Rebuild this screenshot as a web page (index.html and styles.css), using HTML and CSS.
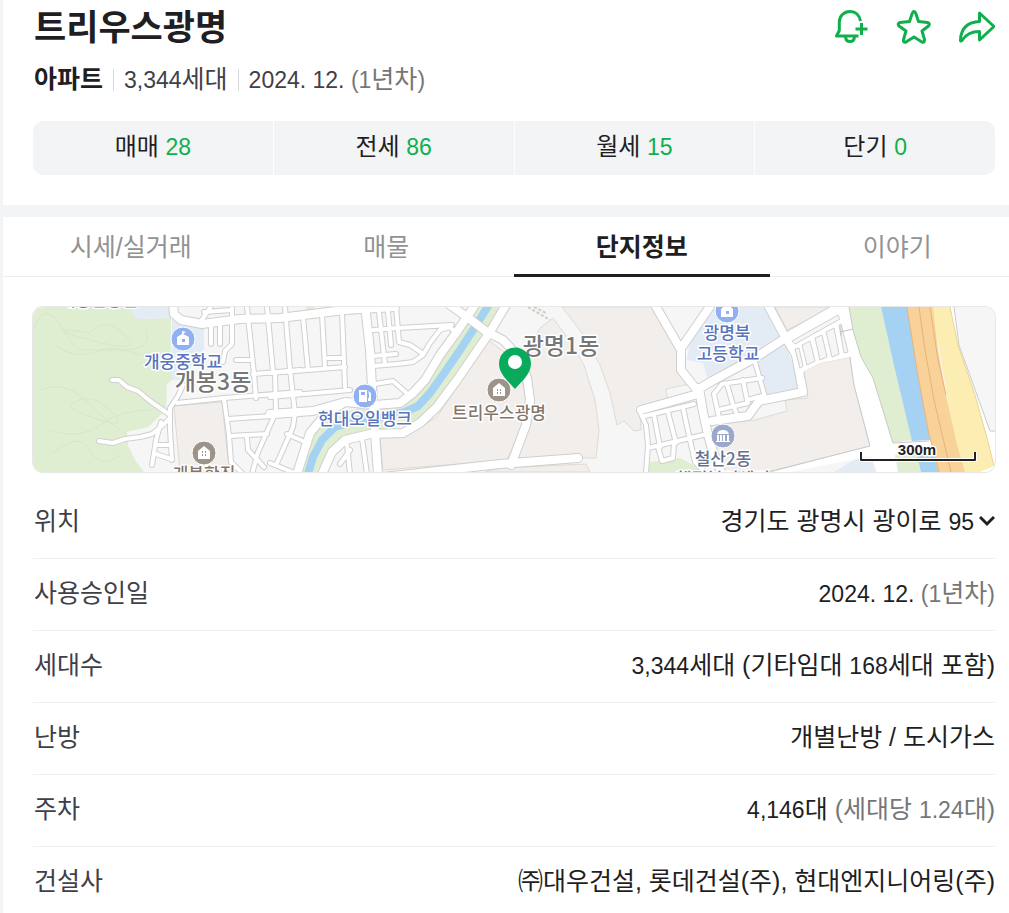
FILE: index.html
```html
<!DOCTYPE html>
<html lang="ko">
<head>
<meta charset="utf-8">
<meta name="viewport" content="width=device-width, initial-scale=1">
<title>트리우스광명</title>
<link rel="stylesheet" href="styles.css">
</head>
<body>
<main class="page">
  <header class="summary">
    <div class="title-row">
      <h1 class="title">트리우스광명</h1>
      <div class="actions">
        <button class="icon-btn" type="button" aria-label="알림 추가">
          <svg width="36" height="36" viewBox="0 0 36 36"><path d="M27.500 13C26.500 7.500 22.500 3.500 17 3.500C11 3.500 6.300 8 6.300 14V22.500L3.500 28H25.500M12.500 29Q13 33.500 17 33.500Q21 33.500 21.500 29M28.500 15v12M22.500 21h12"/></svg>
        </button>
        <button class="icon-btn" type="button" aria-label="관심단지">
          <svg width="36" height="36" viewBox="0 0 36 36"><path d="M18 3.500Q19 3.500 20 6L22.500 13.500L31.500 14.500Q34.500 15.500 32.500 18L26 23L28.500 31.500Q28.500 35 26 34L18 29L10 34Q7 35 7.500 31.500L10 23L3 18Q1 15.500 4 14.500L13.500 13.500L16 6Q17 3.500 18 3.500Z"/></svg>
        </button>
        <button class="icon-btn" type="button" aria-label="공유">
          <svg width="36" height="36" viewBox="0 0 36 36"><path d="M20.500 5L35 18.500L20.500 32V23.500C12 23.500 7 26 3 32.500Q1 34 1.500 31C2.500 20 9 14 20.500 13.500Z"/></svg>
        </button>
      </div>
    </div>
    <div class="meta">
      <strong class="kind">아파트</strong>
      <span class="fact"><span class="num">3,344</span>세대</span>
      <span class="fact"><span class="num">2024. 12. </span><span class="muted"><span class="num">(1</span>년차<span class="num">)</span></span></span>
    </div>
    <div class="deals">
      <button class="deal" type="button">매매 <span class="num count">28</span></button>
      <button class="deal" type="button">전세 <span class="num count">86</span></button>
      <button class="deal" type="button">월세 <span class="num count">15</span></button>
      <button class="deal" type="button">단기 <span class="num count">0</span></button>
    </div>
  </header>

  <nav class="tabs">
    <a class="tab" href="#price">시세/실거래</a>
    <a class="tab" href="#list">매물</a>
    <a class="tab tab-on" href="#info" aria-current="page">단지정보</a>
    <a class="tab" href="#story">이야기</a>
  </nav>

  <section class="info" id="info">
    <svg class="map" viewBox="33 307 962 165" role="img" aria-label="단지 위치 지도">
      <defs>
        <g id="lanes">
          <path d="M112 380L119 380L127 387L138 391L150 401L170 415M99 441L113 443L125 439L140 437L152 434L162 426L170 418M183 385L178 396L170 408V430L172 460M177 403L224 398L300 392M161 422L156 440L152 465M158 445H171M156 454L171 459"/>
          <path d="M212 305L199 324M204 312L232 310M211 324V344M220 324V344M232 305V344L225 351L223 362M236 360H250M247 307L254 374L256 398M267 307L273 372M224 399L229 435L231 462L243 474M275 372L276 412L258 452L252 474M228 419L300 414M230 436L267 434M247 438L248 450L264 467M253 374L300 370"/>
          <path d="M285 307L290 370L295 413L293 427L277 463M303 317L308 370M322 315L325 367M342 313L345 387M270 373L345 367M328 358H343M373 366L397 364L413 362L423 355L430 343L440 330L450 327L457 335M270 397L350 390M375 384L393 381L411 397M373 356L396 354M373 330L398 328L452 325M379 312L385 365M388 312L391 345M396 307L399 342L410 345L422 353"/>
          <path d="M347 445L350 474M362 438L367 474M287 434L305 442M270 463L297 474M340 464L350 450"/>
          <path d="M640 412L646 425L648 445L646 474M645 416L694 404M654 415L660 447M668 412L676 443M683 408L690 440L695 462L703 470M648 448L703 435M658 447L662 461L673 458L674 443"/>
          <path d="M714 394L719 418M714 394L722 384L762 378M727 384L733 405L738 417M743 380L747 400L762 396M718 410L748 403M755 362L765 397"/>
        </g>
        <g id="streets">
          <path d="M173 303L174 314L181 320L202 324L240 319L280 318L320 313L345 310L395 307M270 414L313 411L345 402L375 405L400 403L413 393L425 380L440 355L456 333L475 305M345 402L325 415L310 433L303 455L297 474"/>
          <path d="M365 305L370 350L372 387L375 433L378 474"/>
          <path d="M506 305L490 332L457 380L437 407L420 423L403 433L370 434L345 440L332 452L322 474"/>
          <path d="M450 305L467 317L487 332L503 340L517 355L527 378L530 400L526 425L511 465M383 477L500 464L578 458"/>
          <path d="M655 305L681 350L681 370L697 390M711 305L682 347M641 410L698 394M697 390L712 381L755 358L790 335L842 305M699 388L703 412L708 435L713 452L722 474M768 305L783 333L796 355L803 392L759 401L748 416L712 421"/>
        </g>
      </defs>
      <rect class="ground" x="33" y="307" width="962" height="165"/>
      <path class="green" d="M33 307H128L137 319L171 318V357L173 379L167 384L166 410L148 427L127 432L128 445L135 460L144 472H33Z"/>
      <path class="contour" d="M33 330Q45 300 60 325T80 350T120 350T145 330M55 345Q75 360 95 352T140 355M40 390Q65 380 85 400T120 430M70 405Q90 390 110 410T100 420T70 405M48 430Q80 440 100 425T150 410M50 455Q80 430 90 450T120 455M90 333Q105 315 125 335T90 340T90 333"/>
      <path class="campus" d="M128 307H170L175 322L204 325V350L180 380H172V318L137 319ZM715 307L690 342L687 360L703 363L707 377L765 350L780 336L768 307ZM757 357L785 344L797 375V390L764 397ZM834 472L860 456L872 460L877 472Z"/>
      <path class="estate" d="M174 406L222 402L228 460L231 472H180ZM488 340L515 360L523 385L527 400L520 430L507 460L383 470L380 438L407 435L437 417ZM540 328L553 318L567 337L584 365L595 400L599 430L596 458H515L530 420L532 385L525 355ZM562 307H653L678 350L680 372L690 384L666 389L668 402L640 411L641 430L634 431L624 421L617 425L610 393L600 365L585 337ZM485 472L500 468L586 464L590 472ZM775 307H835L787 330ZM707 425L755 420L787 411L785 400L808 398L803 372L820 363L850 357L854 385L870 446L770 472H718Z"/>
      <path class="green" d="M650 462L680 458L706 472H648ZM306 307H314L313 314H307Z"/>
      <path class="bank" d="M490 303L475 327L460 350L445 372L430 393L418 406L405 412L385 417L360 420L335 427L322 440L313 457L308 474"/>
      <path class="water-line" d="M490 303L475 327L460 350L445 372L430 393L418 406L405 412L385 417L360 420L335 427L322 440L313 457L308 474"/>
      <use class="lane-case" href="#lanes"/>
      <use class="street-case" href="#streets"/>
      <use class="lane" href="#lanes"/>
      <use class="street" href="#streets"/>
      <path class="tracks" d="M528 307L550 320M534 307L546 313"/>
      <path class="road-area" d="M790 336L842 306H849L853 330L861 357L873 378L892 443L935 440V454L895 456L900 473H877L871 456L780 474H765L870 446L854 385L850 357L820 363L803 372Z"/>
      <path class="block" d="M792 341L838 315L840 319L795 344ZM795 349L799 348L803 366L800 368ZM802 345L810 341L815 361L807 365ZM815 338L822 335L827 357L820 360ZM826 332L834 328L839 354L832 357ZM839 325L841 324L848 352L844 353Z"/>
      <path class="fence" d="M840 332L862 327M841 325V336M862 324V328"/>
      <path class="green" d="M849 307H881L895 370L912 440L893 443L873 378L861 357L853 330ZM895 455L917 452L921 472H898Z"/>
      <path class="water" d="M881 307H908L917 370L930 440L912 441L895 370ZM917 455H936L940 472H921Z"/>
      <path class="verge" d="M950 307H954L960 345L977 395L989 430L995 431V472H980Z"/>
      <path class="yellow" d="M932 307H950L958 345L975 395L987 438L994 466L980 472H960Z"/>
      <path class="orange" d="M907 307H933L938 350L946 395L957 445L965 472H938L928 430L917 370Z"/>
      <path class="orange-line" d="M907 307L917 370L928 430L939 472M919 307L925 350L934 400L951 472M930 307L938 360L946 395"/>
      <path class="yellow-line" d="M950 307L958 345L975 395L987 438L994 466"/>
      <path class="edge" d="M954 307L959 345L977 395L990 431H995M849 307L853 330L861 357L873 378L893 443L929 441M850 357L854 385L870 446L768 472"/>

      <g class="poi">
        <circle class="poi-blue" cx="183" cy="339" r="12"/>
        <path d="M177 337L182 334V331L186 332L183 334L189 337V345H177Z"/><rect class="poi-blue-dot" x="182" y="339" width="3" height="3"/>
        <circle class="poi-blue" cx="727" cy="311" r="12"/>
        <path d="M721 309L727 304L733 309V317H721Z"/><rect class="poi-blue-dot" x="726" y="311" width="3" height="3"/>
        <circle class="poi-blue" cx="365" cy="396" r="12"/>
        <path d="M359 390H367V402H359ZM368 391L371 393V401H368V398H369V394Z"/><rect class="poi-blue-dot" x="361" y="392" width="4" height="3"/>
        <circle class="poi-brown" cx="204" cy="453" r="12"/>
        <path d="M198 451L204 446L210 451V459H198Z"/><path class="windows" d="M202 452h1M205 452h1M202 455h1M205 455h1"/>
        <circle class="poi-brown" cx="499" cy="390" r="12"/>
        <path d="M493 388L499 383L505 388V396H493Z"/><path class="windows" d="M497 390h1M500 390h1M497 393h1M500 393h1"/>
        <circle class="poi-slate" cx="723" cy="436" r="12"/>
        <path d="M717 434Q718 430 723 430Q728 430 729 434ZM717 435h2v6h-2zM720 435h2v6h-2zM723 435h2v6h-2zM727 435h2v6h-2zM716 441h14v1h-14z"/>
      </g>

      <g class="label">
        <text class="t-green" x="99" y="306">개웅산공원</text>
        <text class="t-blue" x="183" y="368">개웅중학교</text>
        <text class="t-blue" x="365" y="425">현대오일뱅크</text>
        <text class="t-blue" x="727" y="339">광명북</text>
        <text class="t-blue" x="728" y="360">고등학교</text>
        <text class="t-brown" x="499" y="419">트리우스광명</text>
        <text class="t-brown" x="204" y="480">개봉한진</text>
        <text class="t-slate" x="723" y="465">철산2동</text>
        <text class="t-slate" x="723" y="485">행정복지센터</text>
        <text class="t-area" x="213" y="390">개봉3동</text>
        <text class="t-area" x="561" y="354">광명1동</text>
        <text class="t-scale" x="917" y="455">300m</text>
      </g>
      <path class="scale-halo" d="M861 452V460H975V452"/>
      <path class="scale" d="M861 452V460H975V452"/>
      <path class="pin" fill-rule="evenodd" d="M515 347.500A16 16 0 0 0 499 363.500C499 374 508 381 515 389C522 381 531 374 531 363.500A16 16 0 0 0 515 347.500Z"/>
      <circle class="pin-hole" cx="515" cy="362" r="7"/>
    </svg>

    <dl class="rows">
      <div class="row"><dt>위치</dt><dd><button class="address" type="button">경기도 광명시 광이로 <span class="num">95</span><svg width="16" height="16" viewBox="0 0 16 16"><path d="M1 4L8 11L15 4"/></svg></button></dd></div>
      <div class="row"><dt>사용승인일</dt><dd><span class="num">2024. 12. </span><span class="muted"><span class="num">(1</span>년차<span class="num">)</span></span></dd></div>
      <div class="row"><dt>세대수</dt><dd><span class="num">3,344</span>세대 (기타임대 <span class="num">168</span>세대 포함)</dd></div>
      <div class="row"><dt>난방</dt><dd>개별난방 / 도시가스</dd></div>
      <div class="row"><dt>주차</dt><dd><span class="num">4,146</span>대 <span class="muted">(세대당 <span class="num">1.24</span>대)</span></dd></div>
      <div class="row"><dt>건설사</dt><dd>㈜대우건설, 롯데건설(주), 현대엔지니어링(주)</dd></div>
    </dl>
  </section>
</main>
</body>
</html>
```
FILE: styles.css
```css
* { box-sizing: border-box; }
body {
  margin: 0;
  background: #f2f4f6;
  color: #1e1e23;
  font-family: "Liberation Sans", "Noto Sans CJK KR", sans-serif;
  font-size: 25px;
  line-height: 36px;
}
button {
  border: 0;
  padding: 0;
  background: none;
  color: inherit;
  font: inherit;
}
.num { font-size: 23px; line-height: 24px; }
.muted { color: #767678; }

.page {
  margin-left: 3px;
  background: #fff;
  overflow-x: clip;
}

.summary {
  padding: 4px 14px 30px 30px;
  border-bottom: 12px solid #f2f4f6;
}
.title-row {
  display: flex;
  justify-content: space-between;
  align-items: flex-start;
}
.title {
  margin: 0 0 0 1px;
  font-size: 35px;
  line-height: 48px;
}
.actions { display: flex; gap: 27px; }
.icon-btn { display: block; height: 40px; }
.icon-btn svg {
  display: block;
  margin-top: 4px;
  fill: none;
  stroke: #0fb04c;
  stroke-width: 3;
  stroke-linejoin: round;
}
.meta {
  display: flex;
  align-items: center;
  margin: 9px 0 24px 1px;
  color: #404048;
  white-space: pre;
}
.kind { color: #1e1e23; }
.fact { display: flex; align-items: baseline; }
.fact::before {
  content: "";
  align-self: center;
  width: 1px;
  height: 22px;
  margin: 2px 10px 0;
  background: #d8d8dc;
}
.deals {
  display: grid;
  grid-template-columns: repeat(4, 1fr);
  gap: 1px;
  border-radius: 10px;
  overflow: hidden;
}
.deal {
  padding: 8px 0 10px;
  background: #f2f4f6;
  font-size: 24px;
}
.count { color: #0fb04c; }

.tabs {
  display: grid;
  grid-template-columns: repeat(4, 1fr);
  margin-right: -16px;
  border-bottom: 1px solid #ededf0;
}
.tab {
  margin-bottom: -1px;
  padding: 12px 0 9px;
  border-bottom: 3px solid transparent;
  color: #929294;
  text-align: center;
  text-decoration: none;
}
.tab-on {
  border-color: #1e1e23;
  color: #1e1e23;
  font-weight: bold;
}

.info { padding: 30px 14px 0 30px; }
.map {
  display: block;
  width: 100%;
  border-radius: 10px;
  box-shadow: 0 0 0 1px #e8e8e8;
}
.map path, .map use { stroke-linejoin: round; }
.ground, .block { fill: #f6f6f6; }
.green { fill: #dfedd0; }
.contour { fill: none; stroke: #d6e6c8; }
.campus { fill: #e3ebf4; }
.estate { fill: #f1eeec; stroke: #e0dad2; }
.bank { fill: none; stroke: #dfedd0; stroke-width: 24; }
.water-line { fill: none; stroke: #a5d2f3; stroke-width: 8; }
.water { fill: #a5d2f3; }
.lane-case, .street-case, .lane, .street { fill: none; stroke-linecap: round; }
.lane-case { stroke: #cfcfcf; stroke-width: 6; }
.lane { stroke: #fff; stroke-width: 4; }
.street-case { stroke: #cfcfcf; stroke-width: 10; }
.street { stroke: #fff; stroke-width: 8; }
.tracks { fill: none; stroke: #d0cbc0; stroke-width: 2; stroke-dasharray: 3 2; }
.road-area, .verge { fill: #fff; }
.block { stroke: #cfcfcf; }
.fence { fill: none; stroke: #cdbfb9; }
.orange { fill: #f8d298; }
.orange-line { fill: none; stroke: #e8b27a; stroke-width: 1; }
.yellow { fill: #fceeb3; }
.yellow-line { fill: none; stroke: #ead58c; stroke-width: 1; }
.edge { fill: none; stroke: #cacaca; }
.poi { fill: #fff; }
.poi circle { stroke: #fff; stroke-width: 1; }
.poi-blue, .poi-blue-dot { fill: #91b0f2; }
.poi-brown { fill: #9d9389; }
.poi-slate { fill: #9ba8cb; }
.windows { stroke: #9d9389; stroke-width: 2; }
.label {
  font-family: "Noto Sans CJK KR", sans-serif;
  font-size: 17px;
  font-weight: 500;
  text-anchor: middle;
  paint-order: stroke;
  stroke: #fff;
  stroke-width: 3;
  stroke-linejoin: round;
}
.t-green { fill: #5f8f4f; }
.t-blue { fill: #5874bd; }
.t-brown { fill: #85766b; }
.t-slate { fill: #66718f; }
.t-area { fill: #777; font-size: 23px; }
.t-scale {
  fill: #222;
  font-family: "Liberation Sans", sans-serif;
  font-size: 15px;
  font-weight: bold;
}
.scale, .scale-halo { fill: none; stroke: #222; stroke-width: 2; }
.scale-halo { stroke: #fff; stroke-width: 4; }
.pin { fill: #09aa5c; }
.pin-hole { fill: #fff; }

.rows { margin: 15px 0 0; }
.row {
  display: flex;
  justify-content: space-between;
  padding: 16px 0 19px;
  border-bottom: 1px solid #f0f0f2;
}
.row:last-child { border-bottom: 0; }
.row dt { margin-left: 1px; color: #404048; }
.row dd { margin: 0; text-align: right; }
.address { display: flex; align-items: baseline; white-space: pre; }
.address svg {
  align-self: center;
  margin-left: 5px;
  fill: none;
  stroke: #1e1e23;
  stroke-width: 3;
}
```
